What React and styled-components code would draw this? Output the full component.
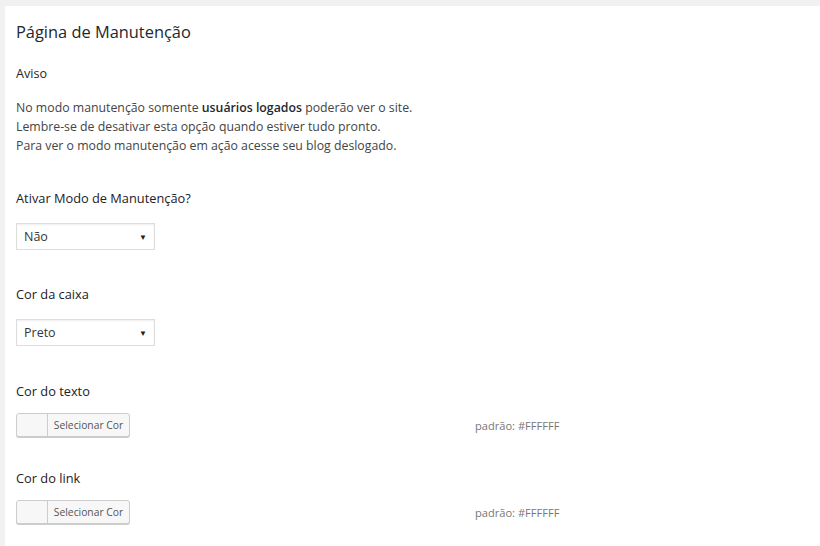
import styled, { createGlobalStyle } from "styled-components";

const GlobalStyle = createGlobalStyle`
  html, body {
    margin: 0;
    padding: 0;
    background: #f1f1f1;
  }
  body {
    font-family: "Open Sans", "Noto Sans", sans-serif;
    color: #444;
  }
`;

const Page = styled.div`
  padding: 6px 0 0 5px;
  height: 546px;
  box-sizing: border-box;
  overflow: hidden;
`;

const Card = styled.section`
  background: #fff;
  height: 100%;
  padding: 15px 11px 0;
  box-sizing: border-box;
`;

const Title = styled.h2`
  margin: 0;
  font-size: 16.4px;
  font-weight: 400;
  color: #23282d;
  line-height: 22px;
`;

const Heading = styled.h3`
  margin: 22px 0 0;
  font-size: 12.6px;
  font-weight: 400;
  color: #23282d;
  line-height: 18px;
`;

const Notice = styled.p`
  margin: 15px 0 0;
  font-size: 12.3px;
  line-height: 19px;
  color: #444;
  b {
    font-weight: 600;
    color: #23282d;
  }
`;

const Field = styled.div`
  margin-top: ${(p) => p.$top}px;
`;

const Label = styled.div`
  font-size: 12.8px;
  font-weight: 400;
  color: #1d2125;
  line-height: 18px;
`;

const Select = styled.div`
  margin-top: 16px;
  width: 139px;
  height: 27px;
  box-sizing: border-box;
  border: 1px solid #ddd;
  box-shadow: inset 0 1px 2px rgba(0, 0, 0, 0.07);
  display: flex;
  align-items: center;
  justify-content: space-between;
  padding: 0 7px 0 7px;
  font-size: 12.5px;
  color: #32373c;
`;

const Arrow = styled.span`
  font-size: 8px;
  color: #222;
`;

const ColorRow = styled.div`
  margin-top: 13px;
  display: grid;
  grid-template-columns: 459px auto;
  align-items: center;
`;

const ColorButton = styled.div`
  width: 114px;
  height: 24px;
  box-sizing: border-box;
  border: 1px solid #ccc;
  border-radius: 3px;
  box-shadow: 0 1px 0 #ccc;
  background: #f7f7f7;
  display: flex;
  overflow: hidden;
`;

const Swatch = styled.span`
  width: 30px;
  background: ${(p) => p.$color};
  border-right: 1px solid #ccc;
`;

const ButtonText = styled.span`
  flex: 1;
  display: flex;
  align-items: center;
  justify-content: center;
  font-size: 10.3px;
  color: #555;
`;

const Default = styled.span`
  font-size: 11.1px;
  color: #777;
`;

const SelectField = ({ top, label, value }) => (
  <Field $top={top}>
    <Label>{label}</Label>
    <Select>
      <span>{value}</span>
      <Arrow>▼</Arrow>
    </Select>
  </Field>
);

const ColorField = ({ top, label }) => (
  <Field $top={top}>
    <Label>{label}</Label>
    <ColorRow>
      <ColorButton>
        <Swatch $color="#f7f7f7" />
        <ButtonText>Selecionar Cor</ButtonText>
      </ColorButton>
      <Default>padrão: #FFFFFF</Default>
    </ColorRow>
  </Field>
);

export default function App() {
  return (
    <>
      <GlobalStyle />
      <Page>
        <Card>
          <Title>Página de Manutenção</Title>
          <Heading>Aviso</Heading>
          <Notice>
            No modo manutenção somente <b>usuários logados</b> poderão ver o site.
            <br />
            Lembre-se de desativar esta opção quando estiver tudo pronto.
            <br />
            Para ver o modo manutenção em ação acesse seu blog deslogado.
          </Notice>
          <SelectField top={34} label="Ativar Modo de Manutenção?" value="Não" />
          <SelectField top={35} label="Cor da caixa" value="Preto" />
          <ColorField top={36} label="Cor do texto" />
          <ColorField top={32} label="Cor do link" />
        </Card>
      </Page>
    </>
  );
}
